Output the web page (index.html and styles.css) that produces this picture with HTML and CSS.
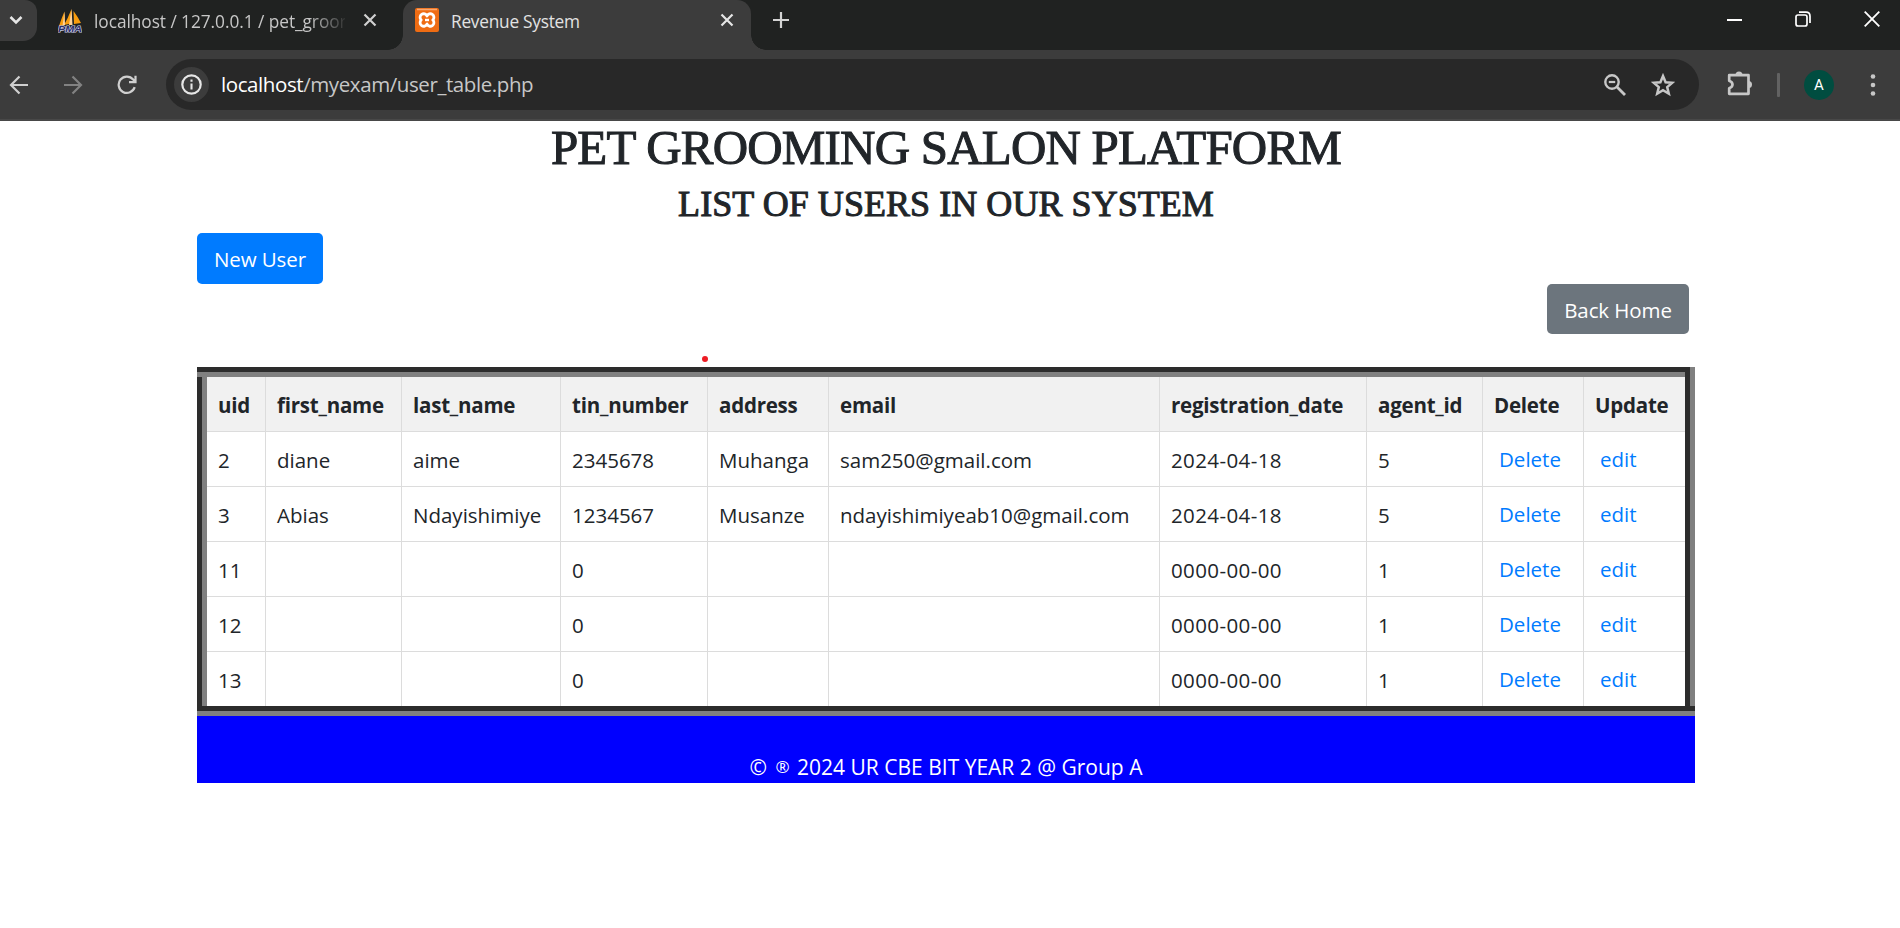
FILE: index.html
```html
<!DOCTYPE html>
<html lang="en">
<head>
<meta charset="utf-8">
<title>Revenue System</title>
<link rel="stylesheet" href="styles.css">
</head>
<body>
<header class="browser">
  <div class="tabstrip">
    <div class="tab-search"><svg width="16" height="12" viewBox="0 0 16 12"><path d="M2.5 3 8 8.500 13.500 3" fill="none" stroke="#e6e6e6" stroke-width="2.600"/></svg></div>
    <div class="tab tab-idle">
      <svg class="favicon" width="24" height="25" viewBox="0 0 24 25">
        <path d="M1 18Q4 9 6.500 3.500V17ZM6 17Q10 10 13.500 1V15.500ZM15.500 3Q20 9 23 15L16 16Z" fill="#f89c0e"/>
        <path d="M4.500 18 6.500 3.500 7 17ZM11 17 13.500 1 14.500 17Z" fill="#ffd29a"/>
        <text class="pma" x="0" y="24" textLength="24" lengthAdjust="spacingAndGlyphs">PMA</text>
      </svg>
      <span class="tab-title faded">localhost / 127.0.0.1 / pet_groor</span>
      <svg class="tab-close" width="14" height="14" viewBox="0 0 14 14"><path d="M1.500 1.500 12.500 12.500M12.500 1.500 1.500 12.500" stroke="#d0d0d0" stroke-width="2.200"/></svg>
    </div>
    <div class="tab tab-active">
      <svg class="favicon" width="24" height="24" viewBox="0 0 24 24">
        <rect width="24" height="24" rx="2" fill="#ef6c13"/><path d="M2 1.500H22" stroke="#f9a870" stroke-width="1.500"/>
        <path d="M12 8A3.600 3.600 0 1 1 17.800 12A3.600 3.600 0 1 1 12 16A3.600 3.600 0 1 1 6.200 12A3.600 3.600 0 1 1 12 8Z" fill="none" stroke="#fff" stroke-width="2.800" stroke-linejoin="round"/>
        <path d="M10 12H14" stroke="#fff" stroke-width="2.400"/>
      </svg>
      <span class="tab-title">Revenue System</span>
      <svg class="tab-close" width="14" height="14" viewBox="0 0 14 14"><path d="M1.500 1.500 12.500 12.500M12.500 1.500 1.500 12.500" stroke="#e6e6e6" stroke-width="2.200"/></svg>
    </div>
    <svg class="new-tab" width="16" height="16" viewBox="0 0 16 16"><path d="M8 0V16M0 8H16" stroke="#d4d4d4" stroke-width="2.200"/></svg>
    <div class="window-controls">
      <svg width="15" height="15" viewBox="0 0 15 15"><path d="M0 8H15" stroke="#fff" stroke-width="2"/></svg>
      <svg width="16" height="16" viewBox="0 0 16 16" fill="none" stroke="#fff" stroke-width="1.700"><rect x="1" y="4" width="11" height="11" rx="2"/><path d="M4 1.200H11Q15 1.200 15 5.200V12"/></svg>
      <svg width="16" height="16" viewBox="0 0 16 16"><path d="M.7.7 15.300 15.300M15.300.7.7 15.300" stroke="#fff" stroke-width="1.800"/></svg>
    </div>
  </div>
  <div class="toolbar">
    <svg class="nav-back" width="20" height="20" viewBox="0 0 20 20"><path d="M19 10H2.500M10.500 1.500 2 10 10.500 18.500" fill="none" stroke="#d0d0d0" stroke-width="2.200"/></svg>
    <svg class="nav-forward" width="20" height="20" viewBox="0 0 20 20"><path d="M1 10H17.500M9.500 1.500 18 10 9.500 18.500" fill="none" stroke="#828282" stroke-width="2.200"/></svg>
    <svg class="nav-reload" width="20" height="20" viewBox="0 0 20 20"><path d="M17.700 12.200A8.200 8.200 0 1 1 16.200 4.500L18 6.500M18.500.8V7.200H12" fill="none" stroke="#d0d0d0" stroke-width="2.200"/></svg>
    <div class="omnibox">
      <div class="site-info"><svg width="21" height="21" viewBox="0 0 21 21"><circle cx="10.500" cy="10.500" r="9.200" fill="none" stroke="#e6e6e6" stroke-width="2.200"/><path d="M10.500 9.500V15.500M10.500 5.500V7.800" stroke="#e6e6e6" stroke-width="2.100"/></svg></div>
      <span class="url"><span class="host">localhost</span>/myexam/user_table.php</span>
      <svg class="zoom-icon" width="22" height="22" viewBox="0 0 22 22" fill="none" stroke="#c7c7c7"><circle cx="8" cy="8" r="6.700" stroke-width="2.400"/><path d="M12.800 12.800 21 21" stroke-width="2.800"/><path d="M4.800 8H11.200" stroke-width="2.200"/></svg>
      <svg class="star-icon" width="24" height="24" viewBox="0 0 24 24"><path d="M12 3 14.600 9.200 21.300 9.700 16.200 14.100 17.800 20.700 12 17.200 6.200 20.700 7.800 14.100 2.700 9.700 9.400 9.200Z" fill="none" stroke="#c7c7c7" stroke-width="2.500"/></svg>
    </div>
    <svg class="ext-icon" width="26" height="26" viewBox="0 0 26 26"><path d="M2.200 5.200H21.500V23.800H2.200V18.200Q5.500 17 5.500 14.500T2.200 10.700Z" fill="none" stroke="#c7c7c7" stroke-width="2.700" stroke-linejoin="round"/><path d="M8.500 5A3.500 3.500 0 0 1 15.500 5ZM21.500 11A3.500 3.500 0 0 1 21.500 18Z" fill="#c7c7c7"/></svg>
    <div class="divider"></div>
    <div class="avatar">A</div>
    <svg class="menu-icon" width="6" height="22" viewBox="0 0 6 22" fill="#c7c7c7"><circle cx="3" cy="2.500" r="2.300"/><circle cx="3" cy="11" r="2.300"/><circle cx="3" cy="19.500" r="2.300"/></svg>
  </div>
</header>
<main class="container">
  <h1>PET GROOMING SALON PLATFORM</h1>
  <h2>LIST OF USERS IN OUR SYSTEM</h2>
  <a class="btn btn-primary">New User</a>
  <a class="btn btn-secondary">Back Home</a>
  <div class="pointer-dot"></div>
  <div class="frame">
    <table>
      <colgroup><col class="c-uid"><col class="c-first"><col class="c-last"><col class="c-tin"><col class="c-address"><col class="c-email"><col class="c-date"><col class="c-agent"><col class="c-delete"><col class="c-update"></colgroup>
      <thead><tr><th>uid</th><th>first_name</th><th>last_name</th><th>tin_number</th><th>address</th><th>email</th><th>registration_date</th><th>agent_id</th><th>Delete</th><th>Update</th></tr></thead>
      <tbody>
        <tr><td>2</td><td>diane</td><td>aime</td><td>2345678</td><td>Muhanga</td><td>sam250@gmail.com</td><td class="date">2024-04-18</td><td>5</td><td><a>Delete</a></td><td><a>edit</a></td></tr>
        <tr><td>3</td><td>Abias</td><td>Ndayishimiye</td><td>1234567</td><td>Musanze</td><td>ndayishimiyeab10@gmail.com</td><td class="date">2024-04-18</td><td>5</td><td><a>Delete</a></td><td><a>edit</a></td></tr>
        <tr><td>11</td><td></td><td></td><td>0</td><td></td><td></td><td class="date">0000-00-00</td><td>1</td><td><a>Delete</a></td><td><a>edit</a></td></tr>
        <tr><td>12</td><td></td><td></td><td>0</td><td></td><td></td><td class="date">0000-00-00</td><td>1</td><td><a>Delete</a></td><td><a>edit</a></td></tr>
        <tr><td>13</td><td></td><td></td><td>0</td><td></td><td></td><td class="date">0000-00-00</td><td>1</td><td><a>Delete</a></td><td><a>edit</a></td></tr>
      </tbody>
    </table>
  </div>
  <footer>© <span class="reg">®</span> 2024 UR CBE BIT YEAR 2 @ Group A</footer>
</main>
</body>
</html>
```
FILE: styles.css
```css
* { box-sizing: border-box; }
body {
  margin: 0;
  height: 928px;
  overflow: hidden;
  background: #fff;
  color: #212529;
  font-family: "Segoe UI", "Open Sans", "Noto Sans", sans-serif;
  font-size: 20.5px;
}
svg { display: block; flex: none; }

/* Browser chrome */
.browser { height: 121px; background: #3c3c3c; border-bottom: 2px solid #484848; }
.tabstrip { display: flex; align-items: flex-start; height: 50px; background: #202221; }
.tab-search { display: flex; justify-content: center; width: 37px; height: 41px; padding: 14px 5px 0 0; border-radius: 0 12px 14px 0; background: #3c3c3c; }
.tab { display: flex; align-items: flex-start; height: 50px; color: #c7c7c7; font-size: 17.3px; }
.tab-idle { width: 366px; padding-left: 21px; }
.tab-active { position: relative; width: 348px; padding-left: 12px; background: #3c3c3c; border-radius: 14px 14px 0 0; color: #e3e3e3; }
/* Feet of the active tab, curving out into the toolbar */
.tab-active::before, .tab-active::after { content: ""; position: absolute; bottom: 0; width: 15px; height: 15px; }
.tab-active::before { left: -15px; background: radial-gradient(circle at 0 0, transparent 14.5px, #3c3c3c 15px); }
.tab-active::after { right: -15px; background: radial-gradient(circle at 100% 0, transparent 14.5px, #3c3c3c 15px); }
.favicon { margin-top: 8px; }
.pma { font: italic bold 9px "Liberation Sans", sans-serif; fill: #2b2d6b; stroke: #c9cbe2; stroke-width: 1.2px; paint-order: stroke; }
.tab-title { flex: none; width: 254px; margin-left: 12px; overflow: hidden; white-space: nowrap; line-height: 24px; padding-top: 10px; letter-spacing: -.25px; }
.tab-idle .tab-title { width: 251px; letter-spacing: -.05px; }
.faded { -webkit-mask-image: linear-gradient(90deg, #000 215px, transparent 255px); mask-image: linear-gradient(90deg, #000 215px, transparent 255px); }
.tab-close { margin: 13px 0 0 18px; }
.tab-active .tab-close { margin-left: 15px; }
.new-tab { margin: 12px 0 0 22px; }
.window-controls { display: flex; align-items: center; gap: 53px; margin: 11px 20px 0 auto; }
.toolbar { display: flex; align-items: center; height: 69px; }
.nav-back { margin-left: 9px; }
.nav-forward { margin-left: 34px; }
.nav-reload { margin-left: 34px; }
.omnibox { display: flex; align-items: center; width: 1533px; height: 51px; margin-left: 29px; padding-left: 8px; border-radius: 26px; background: #282828; }
.site-info { display: flex; align-items: center; justify-content: center; width: 35px; height: 35px; border-radius: 50%; background: #3c3c3c; }
.url { margin: 0 0 2px 12px; color: #c7c7c7; font-size: 20.5px; letter-spacing: -.41px; }
.host { color: #fff; }
.zoom-icon { margin-left: auto; }
.star-icon { margin: 0 24px 0 25px; }
.ext-icon { margin: 0 0 3px 28px; }
.divider { width: 3px; height: 24px; margin-left: 24px; background: #626262; border-radius: 1px; }
.avatar { width: 30px; height: 30px; margin-left: 24px; border-radius: 50%; background: #004d40; color: #fff; font: 15px/30px Roboto, sans-serif; text-align: center; }
.menu-icon { margin-left: 36px; }

/* Page */
.container { display: flex; flex-direction: column; align-items: flex-start; width: 1498px; margin-left: 197px; }
h1, h2 { width: 100%; margin: 0; text-align: center; font-family: "Century Schoolbook", "C059", "Liberation Serif", serif; font-weight: 400; -webkit-text-stroke: 1px #212529; white-space: nowrap; }
h1 { height: 64px; font-size: 49px; line-height: 54px; letter-spacing: -.8px; }
h2 { height: 48px; font-size: 36px; line-height: 38px; letter-spacing: .05px; }
.btn { display: block; height: 51px; border-radius: 5px; color: #fff; line-height: 52px; text-align: center; }
.btn-primary { width: 126px; background: #007bff; letter-spacing: -.1px; }
.btn-secondary { align-self: flex-end; width: 142px; height: 50px; margin-right: 6px; background: #6c757d; letter-spacing: -.1px; }
.pointer-dot { width: 6px; height: 6px; margin: 22px 0 5px 505px; border-radius: 50%; background: #ed1c24; }
.frame {
  width: 100%;
  height: 349px;
  padding: 10px;
  --dark: linear-gradient(#2c2c2c, #2c2c2c);
  --gray: linear-gradient(#808080, #808080);
  background:
    var(--dark) 0 0 / calc(100% - 5px) 5px no-repeat,
    var(--gray) 0 5px / calc(100% - 10px) 5px no-repeat,
    var(--gray) 0 100% / 100% 5px no-repeat,
    var(--dark) 0 calc(100% - 5px) / 100% 5px no-repeat,
    var(--dark) 0 0 / 5px 100% no-repeat,
    var(--gray) 5px 0 / 5px 100% no-repeat,
    var(--dark) calc(100% - 5px) 0 / 5px 100% no-repeat,
    var(--gray) 100% 0 / 5px 100% no-repeat;
}
table { width: 1478px; table-layout: fixed; border-collapse: separate; border-spacing: 0; }
th, td { height: 55px; padding: 1px 0 0 11px; border: solid #dcdcdc; border-width: 0 1px 1px 0; text-align: left; white-space: nowrap; line-height: 32px; }
th { background: #f1f1f1; font-weight: 700; letter-spacing: -.23px; }
th:last-child, td:last-child { border-right: 0; }
tbody tr:last-child td { height: 54px; border-bottom: 0; }
.date { letter-spacing: .4px; }
td a { display: block; margin-top: -2px; padding-left: 5px; color: #007bff; }
.c-uid { width: 59px; }
.c-first { width: 136px; }
.c-last { width: 159px; }
.c-tin { width: 147px; }
.c-address { width: 121px; }
.c-email { width: 331px; }
.c-date { width: 207px; }
.c-agent { width: 116px; }
.c-delete, .c-update { width: 101px; }
footer { width: 100%; height: 67px; padding-top: 35px; background: #00f; color: #fff; text-align: center; line-height: 32px; font-size: 21px; letter-spacing: 0; }
.reg { margin: 0 2px 0 3px; font-size: 17px; vertical-align: 2px; line-height: 1; }
```
